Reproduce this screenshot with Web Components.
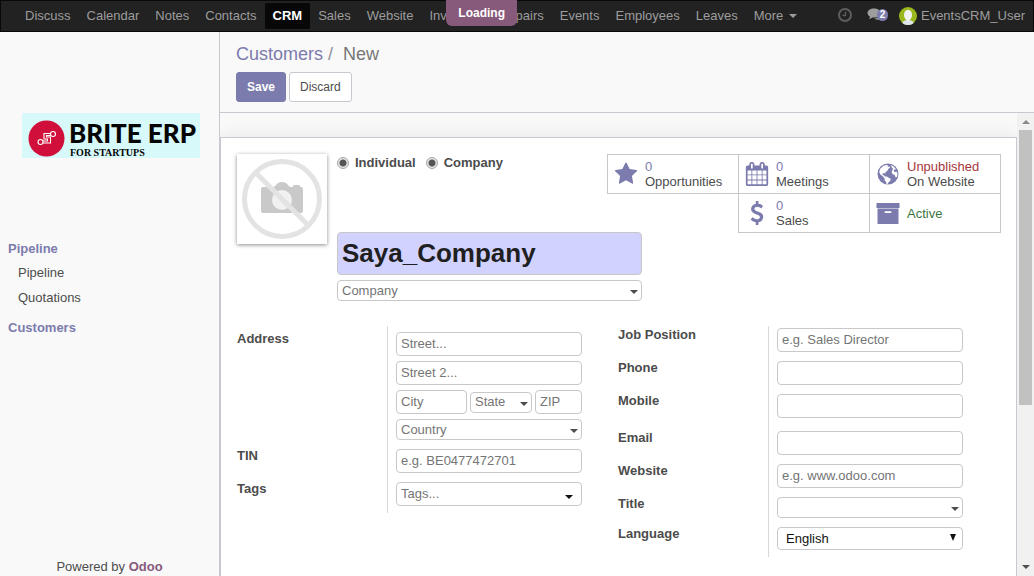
<!DOCTYPE html>
<html lang="en">
<head>
<meta charset="utf-8">
<title>Customers / New</title>
<style>
  html, body { margin: 0; height: 100%; }
  body { font: 13px/18px "Liberation Sans", Arial, sans-serif; color: #4c4c4c; background: #f9f9f9; }
</style>
</head>
<body>
<crm-app></crm-app>

<script>
const controlCss = `
  *, *::before, *::after { box-sizing: border-box; }
  input, select {
    display: block; width: 100%; margin: 0; padding: 0 4px; font: inherit; color: #1f1f1f;
    background: #fff; border: 1px solid #c8c8c8; border-radius: 4px; outline: 0;
  }
  input { height: 24px; padding-bottom: 2px; }
  input::placeholder { color: #757575; opacity: 1; }
  select { height: 21px; appearance: none; color: #757575; }
  .pick { position: relative; display: block; }
  .pick::after {
    content: ""; position: absolute; right: 4px; bottom: 7px; pointer-events: none;
    border: 4px solid transparent; border-top-color: #4c4c4c; border-bottom: 0;
  }
`;

function define(name, html, setup) {
  customElements.define(name, class extends HTMLElement {
    constructor() {
      super();
      this.attachShadow({ mode: 'open' });
    }
    connectedCallback() {
      if (this.shadowRoot.childNodes.length) return;
      this.shadowRoot.innerHTML = typeof html === 'function' ? html(this) : html;
      if (setup) setup(this);
    }
  });
}

/* Icons */
const icons = {
  star: ['0 0 1664 1792', '<path d="M1664 647q0 22-26 48l-363 354 86 500q1 7 1 20 0 21-10.500 35.500t-30.500 14.500q-19 0-40-12l-449-236-449 236q-22 12-40 12-21 0-31.500-14.500t-10.500-35.500q0-6 2-20l86-500-364-354q-25-27-25-48 0-37 56-46l502-73 225-455q19-41 49-41t49 41l225 455 502 73q56 9 56 46z"/>'],
  calendar: ['64 0 1664 1792', '<path d="M192 1664h288v-288h-288v288zm352 0h320v-288h-320v288zm-352-352h288v-320h-288v320zm352 0h320v-320h-320v320zm-352-384h288v-288h-288v288zm736 736h320v-288h-320v288zm-384-736h320v-288h-320v288zm768 736h288v-288h-288v288zm-384-352h320v-320h-320v320zm-352-864v-288q0-13-9.500-22.500t-22.500-9.500h-64q-13 0-22.500 9.500t-9.500 22.500v288q0 13 9.500 22.500t22.500 9.500h64q13 0 22.500-9.500t9.500-22.500zm736 864h288v-320h-288v320zm-384-384h320v-288h-320v288zm384 0h288v-288h-288v288zm32-480v-288q0-13-9.500-22.500t-22.500-9.500h-64q-13 0-22.500 9.500t-9.500 22.500v288q0 13 9.500 22.500t22.500 9.500h64q13 0 22.500-9.500t9.500-22.500zm384-64v1280q0 52-38 90t-90 38h-1408q-52 0-90-38t-38-90v-1280q0-52 38-90t90-38h128v-96q0-66 47-113t113-47h64q66 0 113 47t47 113v96h384v-96q0-66 47-113t113-47h64q66 0 113 47t47 113v96h128q52 0 90 38t38 90z"/>'],
  dollar: ['0 0 1792 1792', '<path d="M1362 1185q0 153-99.500 263.500t-258.500 136.500v175q0 14-9 23t-23 9h-135q-13 0-22.500-9.500t-9.500-22.500v-175q-66-9-127.500-31t-101.500-44.500-74-48-46.500-37.500-17.500-18q-17-21-2-41l103-135q7-10 23-12 15-2 24 9l2 2q113 99 243 125 37 8 74 8 81 0 142.500-43t61.500-122q0-28-15-53t-33.500-42-58.500-37.500-66-32-80-32.500q-39-16-61.500-25t-61.500-26.500-62.500-31-56.500-35.500-53.500-42.500-43.500-49-35.500-58-21-66.500-8.500-78q0-138 98-242t255-134v-180q0-13 9.500-22.500t22.500-9.500h135q14 0 23 9t9 23v176q57 6 110.500 23t87 33.500 63.500 37.500 39 29 15 14q17 18 5 38l-81 146q-8 15-23 16-14 3-27-7-3-3-14.500-12t-39-26.500-58.500-32-74.500-26-85.500-11.500q-95 0-155 43t-60 111q0 26 8.500 48t29.500 41.500 39.500 33 56 31 60.500 27 70 27.500q53 20 81 31.500t76 35 75.500 42.500 62 50 53 63.500 31.500 76.500 13 94z"/>'],
  globe: ['0 0 24 24', '<circle cx="12" cy="12" r="10.500"/><path fill="#fff" d="M7.500 3.700 10.600 3l1.600.6-.7 1.200 1.800-.3.9 1.100-1.700 1.100-.9 1.900-1.900 1.300-.4 1.600-1.500-.5-1.300.7.2 1.500 1.500.1.600 1.100 2 .2 2.200 1.300 1.700.8-.4 2-1.600 1.300-.7 1.600-1.600 1-.2-2.500-1.500-1.700-.1-2L6.500 14l-2-1.300L3.200 9.900l1-3.100zM14.500 3.100l3.200 1.300 2.500 3-1.500-.2-1.100 1.300.8 1.500 2.300-.3.900 2.100-.5 3-1.400.8-1-2.600-1.900-.7-1.100-1.900.5-2.300 1.200-1.200-1.200-1z"/>'],
  archive: ['0 0 24 24', '<path d="M.5 2h23v5H.5zM1.500 7.600h21V23h-21z"/><path fill="#fff" d="M9.500 10.300h5q1 0 1 .9t-1 .9h-5q-1 0-1-.9t1-.9z"/>']
};

define('fa-icon', el => {
  const [box, body] = icons[el.getAttribute('name')];
  return `<style>:host{display:block;width:24px;height:24px}svg{display:block;width:100%;height:100%;fill:#7c7bad}</style>
    <svg viewBox="${box}" aria-hidden="true">${body}</svg>`;
});

/* Top navigation bar */
define('top-navbar', `
<style>
  :host { display: flex; position: relative; flex: none; align-items: center; box-sizing: border-box; height: 32px;
    padding: 0 8px 0 16px; background: #222; border: 1px solid #080808; }
  ul { display: flex; margin: 0; padding: 0; list-style: none; }
  a { display: block; padding: 0 8px; line-height: 26px; color: #9d9d9d; text-decoration: none; white-space: nowrap; }
  a.active { background: #080808; color: #fff; font-weight: bold; }
  .more::after { content: ""; display: inline-block; margin-left: 6px; vertical-align: 2px;
    border: 4px solid transparent; border-top-color: currentColor; border-bottom: 0; }
  .tray { display: flex; align-items: center; margin-left: auto; }
  .tray button { display: block; padding: 0; border: 0; background: none; height: 18px; }
  .chat { position: relative; margin: 0 10px 0 15px; width: 22px; }
  .clock { width: 14px; }
  svg { display: block; }
  .chat b { position: absolute; left: 10px; top: 2px; width: 11px; height: 12px; border-radius: 6px;
    background: #7c7bad; color: #fff; font: bold 10px/12px "Liberation Sans", Arial, sans-serif; text-align: center; }
  .tray a { display: flex; align-items: center; gap: 4px; padding: 0; }
  .loading { position: absolute; right: 50%; top: -1px; padding: 0 12px; border-radius: 0 0 6px 6px;
    background: #875a7b; color: #fff; font: bold 12px/26px "Liberation Sans", Arial, sans-serif; }
</style>
<nav><ul>
  <li><a href="#">Discuss</a></li><li><a href="#">Calendar</a></li><li><a href="#">Notes</a></li>
  <li><a href="#">Contacts</a></li><li><a href="#" class="active">CRM</a></li><li><a href="#">Sales</a></li>
  <li><a href="#">Website</a></li><li><a href="#">Inventory</a></li><li><a href="#">Repairs</a></li>
  <li><a href="#">Events</a></li><li><a href="#">Employees</a></li><li><a href="#">Leaves</a></li>
  <li><a href="#" class="more">More</a></li>
</ul></nav>
<div class="tray">
  <button class="clock" aria-label="Activities"><svg width="14" height="16" viewBox="0 0 14 16" fill="none" stroke="#5e5e5e"><circle cx="7" cy="7" r="6" stroke-width="2"/><path d="M7.500 3.500v4H4.500" stroke-width="1.300"/></svg></button>
  <button class="chat" aria-label="Conversations"><svg width="22" height="18" viewBox="0 0 22 18" fill="#9d9d9d"><path d="M7 1.500c3.600 0 6.500 2 6.500 4.500s-2.900 4.500-6.500 4.500q-.8 0-1.500-.1Q4 11.700 1.700 12q1.200-1 1.400-2.300C1.500 8.900.5 7.500.5 6 .5 3.500 3.400 1.500 7 1.500z"/><path d="M7 11.600c4 0 7.600-2.200 7.600-6q2.900 1.500 2.900 3.400 0 1.600-1.800 2.800.2 1.200 1.300 2.200-2-.2-3.600-1.400-3.600.7-6.400-1z"/></svg><b>2</b></button>
  <a href="#"><svg width="18" height="18" viewBox="0 0 18 18"><circle cx="9" cy="9" r="9" fill="#9ab81e"/><path d="M3.300 16c.5-2.200 2.600-2.400 4-3h3.400c1.400.6 3.500.8 4 3A9 9 0 0 1 3.300 16z" fill="#dfe6ea"/><ellipse cx="9" cy="8" rx="4" ry="5.300" fill="#f0f2f4"/></svg>EventsCRM_User</a>
</div>
<div class="loading">Loading</div>
`, el => el.shadowRoot.querySelector('.loading').setAttribute('role', 'status'));

/* Logo */
define('brand-logo', `
<style>
  :host { display: flex; align-items: center; box-sizing: border-box; width: 178px; height: 45px; padding: 6px 0 0 6px; gap: 4px;
    background: #d7f9f9; color: #050505; }
  svg { flex: none; }
  strong, small { display: block; white-space: nowrap; }
  strong { font: 900 26px/28px Lato, sans-serif; }
  small { font: bold 10px/12px "Liberation Serif", serif; padding-left: 1px; }
</style>
<svg width="37" height="37" viewBox="0 0 37 37"><circle cx="18.500" cy="18.500" r="18" fill="#d0103a"/>
  <g fill="none" stroke="#fff" stroke-width="1.100"><circle cx="12.500" cy="22" r="2.500"/><circle cx="25" cy="14" r="2.500"/>
  <path d="M15 21h4.500v-2h-3.500v-5.500h6.500M15 23h7.500v-6h-4v-1.500H23"/></g></svg>
<div><strong>BRITE ERP</strong><small>FOR STARTUPS</small></div>
`);

/* Left menu */
define('side-menu', `
<style>
  :host { display: flex; flex-direction: column; align-items: stretch; box-sizing: border-box; flex: none; width: 220px;
    padding-top: 81px; border-right: 1px solid #c8c8d0; }
  brand-logo { margin: 0 22px 81px; }
  h2 { margin: 0 0 1px; padding-left: 8px; font: inherit; font-weight: bold; line-height: 20px; }
  h2 a { color: #7c7bad; }
  ul { margin: 0 0 8px; padding: 0 0 0 18px; list-style: none; line-height: 25px; }
  a { color: #4c4c4c; text-decoration: none; }
  footer { margin-top: auto; text-align: center; line-height: 18px; }
  footer a { color: #875a7b; font-weight: bold; }
</style>
<brand-logo></brand-logo>
<nav>
  <h2><a href="#">Pipeline</a></h2>
  <ul><li><a href="#">Pipeline</a></li><li><a href="#">Quotations</a></li></ul>
  <h2><a href="#">Customers</a></h2>
</nav>
<footer>Powered by <a href="#">Odoo</a></footer>
`);

/* Breadcrumb and form actions */
define('control-panel', `
<style>
  :host { display: block; flex: none; padding: 10px 16px; border-bottom: 1px solid #c8c8d0; }
  ol { display: flex; margin: 0 0 6px; padding: 0; list-style: none; font-size: 18px; line-height: 24px; color: #777; }
  a { color: #7c7bad; text-decoration: none; }
  li + li::before { content: "/"; padding: 0 10px 0 5px; color: #8f8f9f; }
  div { display: flex; gap: 3px; }
  button { height: 30px; padding: 0 10px; border: 1px solid #c8c8d0; border-radius: 3px; background: #fff; color: #4c4c4c;
    font: 12px/16px "Liberation Sans", Arial, sans-serif; }
  .primary { background: #7c7bad; border-color: #7c7bad; color: #fff; font-weight: bold; }
</style>
<ol><li><a href="#">Customers</a></li><li>New</li></ol>
<div><button class="primary">Save</button><button>Discard</button></div>
`);

/* Smart button */
define('stat-button', el => `
<style>
  :host { display: block; margin: 0 -1px -1px 0; }
  button { display: flex; align-items: center; gap: 7px; box-sizing: border-box; width: 100%; height: 40px; padding: 0 0 0 6px;
    border: 1px solid #c8c8c8; background: #fff; font: inherit; line-height: 15px; color: #4c4c4c; text-align: left; white-space: nowrap; }
  ::slotted([slot=value]) { display: block; color: #7c7bad; }
  ::slotted([slot=value].off) { color: #a8373b; }
  ::slotted(.on) { color: #3c763d; }
</style>
<button><fa-icon name="${el.getAttribute('icon')}"></fa-icon><span><slot name="value"></slot><slot></slot></span></button>
`);

/* Picture placeholder */
define('partner-image', `
<style>
  :host { display: block; flex: none; width: 90px; height: 90px; background: #fff; box-shadow: 0 1px 4px rgba(0,0,0,.45); }
  svg { display: block; }
</style>
<svg width="90" height="90" viewBox="0 0 90 90" role="img" aria-label="No picture">
  <path fill="#c9c9c9" d="M26 33h10q2 0 3-2 2-3 6-3t6 3q1 2 3 2h2v-1q0-1 1-1h5q1 0 1 1v1h1q2 0 2 2v22q0 2-2 2H26q-2 0-2-2V35q0-2 2-2z"/>
  <circle cx="45" cy="46" r="10" fill="#f1f1f1"/>
  <circle cx="45" cy="45" r="37.500" fill="none" stroke="#e3e3e3" stroke-width="5"/>
  <path d="M19 19 71 71" stroke="#e3e3e3" stroke-width="5"/>
</svg>
`);

/* Name, type and company; smart buttons go beside the type */
define('partner-title', `
<style>${controlCss}
  :host { display: block; flex: 1; min-width: 0; }
  .kinds { display: flex; height: 78px; }
  .kinds label { display: flex; align-items: center; height: 18px; margin-right: 10px; font-weight: bold; }
  ::slotted(*) { margin-left: auto; }
  input[type=radio] { appearance: none; flex: none; width: 12px; height: 12px; margin-right: 6px; padding: 0; border: 1px solid #a6a6a6; border-radius: 50%;
    background: radial-gradient(circle, #555 0 3px, #e6e6e6 4px); }
  .name, .pick { max-width: 305px; }
  .name { height: 43px; margin-bottom: 5px; padding-bottom: 0; font-size: 26px; font-weight: bold; background: #d2d2ff; }
</style>
<div class="kinds">
  <label><input type="radio" name="person" checked>Individual</label>
  <label><input type="radio" name="organisation" checked>Company</label>
  <slot></slot>
</div>
<input class="name" aria-label="Name" value="Saya_Company">
<span class="pick"><select aria-label="Company"><option>Company</option></select></span>
`);

/* Group of labelled rows with a divider between labels and fields */
define('form-group', `
<style>
  :host { display: flex; flex-direction: column; gap: 9px; align-self: start; padding: 2px 0 7px;
    background: linear-gradient(#d9d9d9, #d9d9d9) 150px 0 / 1px 100% no-repeat; }
  :host([address]) { padding-top: 6px; }
</style><slot></slot>
`);

const rowCss = `${controlCss}
  :host { display: flex; align-items: flex-start; }
  :host([apart]) { margin-top: 4px; }
  label { flex: none; width: 159px; line-height: 14px; font-weight: bold; }
  .field { flex: 0 1 186px; min-width: 0; }
`;

define('form-row', el => {
  const text = el.getAttribute('text') || '';
  const kind = el.getAttribute('kind');
  const control = kind
    ? `<span class="pick ${kind}"><select id="f"><option>${text}</option></select></span>`
    : `<input id="f" placeholder="${text}">`;
  return `<style>${rowCss}
    .tags select { height: 24px; }
    .tags::after { right: 9px; border-top-color: #111; }
    .list select { height: 23px; padding-left: 8px; color: #111; }
    .list::after { border-width: 7px 3px 0; border-top-color: #111; right: 7px; bottom: 9px; }
  </style><label for="f">${el.getAttribute('label')}</label><div class="field">${control}</div>`;
});

define('address-row', `
<style>${rowCss}
  .field { display: grid; gap: 5px; }
  .town { display: grid; grid-template-columns: 71fr 62fr 47fr; gap: 3px; align-items: center; }
</style>
<label for="street">Address</label>
<div class="field">
  <input id="street" placeholder="Street...">
  <input aria-label="Street 2" placeholder="Street 2...">
  <div class="town">
    <input aria-label="City" placeholder="City">
    <span class="pick"><select aria-label="State"><option>State</option></select></span>
    <input aria-label="ZIP" placeholder="ZIP">
  </div>
  <span class="pick"><select aria-label="Country"><option>Country</option></select></span>
</div>
`);

/* Scroll track beside the sheet */
define('scroll-track', `
<style>
  :host { display: flex; flex-direction: column; align-items: center; justify-content: space-between; flex: none; width: 17px; background: #f1f1f1; }
  i { border: 4px solid transparent; }
  .up { margin-top: 7px; border-top: 0; border-bottom-color: #8a8a8a; }
  .down { margin-bottom: 7px; border-bottom: 0; border-top-color: #505050; }
  div { flex: 1; align-self: stretch; margin: 6px 2px; }
  b { display: block; height: 64%; background: #c1c1c1; }
</style><i class="up"></i><div><b></b></div><i class="down"></i>
`);

define('partner-form', `
<style>
  :host { display: block; box-sizing: border-box; flex: 1; min-width: 0; margin-top: 24px; padding: 16px; background: #fff;
    border: 1px solid #c8c8d0; border-bottom: 0; box-shadow: 0 -4px 16px rgba(0,0,0,.06); }
  .head { display: flex; align-items: flex-start; gap: 10px; margin-bottom: 25px; }
  .stats { display: grid; flex: none; grid-template-columns: repeat(3, 131px); grid-auto-rows: 39px; }
  .second { grid-column-start: 2; }
  .groups { display: grid; grid-template-columns: 1fr 1fr; padding-right: 1px; }
</style>
<div class="head">
  <partner-image></partner-image>
  <partner-title>
    <div class="stats">
      <stat-button icon="star"><span slot="value">0</span>Opportunities</stat-button>
      <stat-button icon="calendar"><span slot="value">0</span>Meetings</stat-button>
      <stat-button icon="globe"><span slot="value" class="off">Unpublished</span>On Website</stat-button>
      <stat-button icon="dollar" class="second"><span slot="value">0</span>Sales</stat-button>
      <stat-button icon="archive"><span class="on">Active</span></stat-button>
    </div>
  </partner-title>
</div>
<div class="groups">
  <form-group address>
    <address-row></address-row>
    <form-row label="TIN" text="e.g. BE0477472701"></form-row>
    <form-row label="Tags" kind="tags" text="Tags..."></form-row>
  </form-group>
  <form-group>
    <form-row label="Job Position" text="e.g. Sales Director"></form-row>
    <form-row label="Phone"></form-row>
    <form-row label="Mobile"></form-row>
    <form-row label="Email" apart></form-row>
    <form-row label="Website" text="e.g. www.odoo.com"></form-row>
    <form-row label="Title" kind="record"></form-row>
    <form-row label="Language" kind="list" text="English"></form-row>
  </form-group>
</div>
`);

define('crm-app', `
<style>
  :host { display: flex; flex-direction: column; height: 100vh; overflow: hidden; }
  .body { display: flex; flex: 1; min-height: 0; }
  main { display: flex; flex-direction: column; flex: 1; min-width: 0; }
  .view { display: flex; flex: 1; min-height: 0; overflow: hidden; }
</style>
<top-navbar></top-navbar>
<div class="body">
  <side-menu></side-menu>
  <main>
    <control-panel></control-panel>
    <div class="view"><partner-form></partner-form><scroll-track></scroll-track></div>
  </main>
</div>
`);
</script>
</body>
</html>
